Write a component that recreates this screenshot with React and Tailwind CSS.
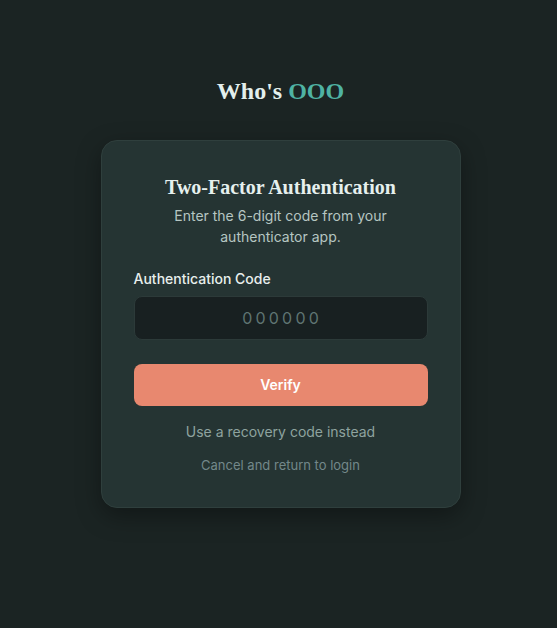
export default function App() {
  const serif = { fontFamily: '"Liberation Serif", "DejaVu Serif", serif' }

  return (
    <div
      className="min-h-screen w-full bg-[#1b2423] flex flex-col items-center pt-[75px] pl-1"
      style={{ fontFamily: 'Inter, "Noto Sans", sans-serif' }}
    >
      {/* Brand */}
      <h1 className="text-[24px] leading-8 font-bold text-[#e3efec]" style={serif}>
        Who's <span className="text-[#4fb3a3]">OOO</span>
      </h1>

      {/* Card */}
      <div className="mt-[33px] w-[360px] rounded-2xl border border-[#2f3f3d] bg-[#253433] px-8 pt-8 pb-8 shadow-[0_8px_24px_rgba(0,0,0,0.35)]">
        <div className="text-center">
          <h2 className="text-[20px] leading-7 font-bold text-[#e6f0ee]" style={serif}>
            Two-Factor Authentication
          </h2>
          <p className="mt-1 text-sm leading-[21px] text-[#b6c6c2] px-6">
            Enter the 6-digit code from your authenticator app.
          </p>
        </div>

        <label className="mt-[22px] block text-sm leading-5 font-medium text-[#e8efed]">
          Authentication Code
        </label>
        <div className="mt-[7px] h-11 w-full rounded-lg border border-[#2c3a39] bg-[#182021] flex items-center justify-center">
          <span className="text-base tracking-[0.2em] text-[#5f7472] pl-[0.2em]">000000</span>
        </div>

        <button className="mt-6 h-[42px] w-full rounded-lg bg-[#e8886f] text-sm font-semibold text-white">
          Verify
        </button>

        <div className="mt-4 text-center text-sm leading-5 text-[#8ea39f]">
          Use a recovery code instead
        </div>
        <div className="mt-[13px] text-center text-[13px] leading-5 text-[#73888a]">
          Cancel and return to login
        </div>
      </div>
    </div>
  )
}
